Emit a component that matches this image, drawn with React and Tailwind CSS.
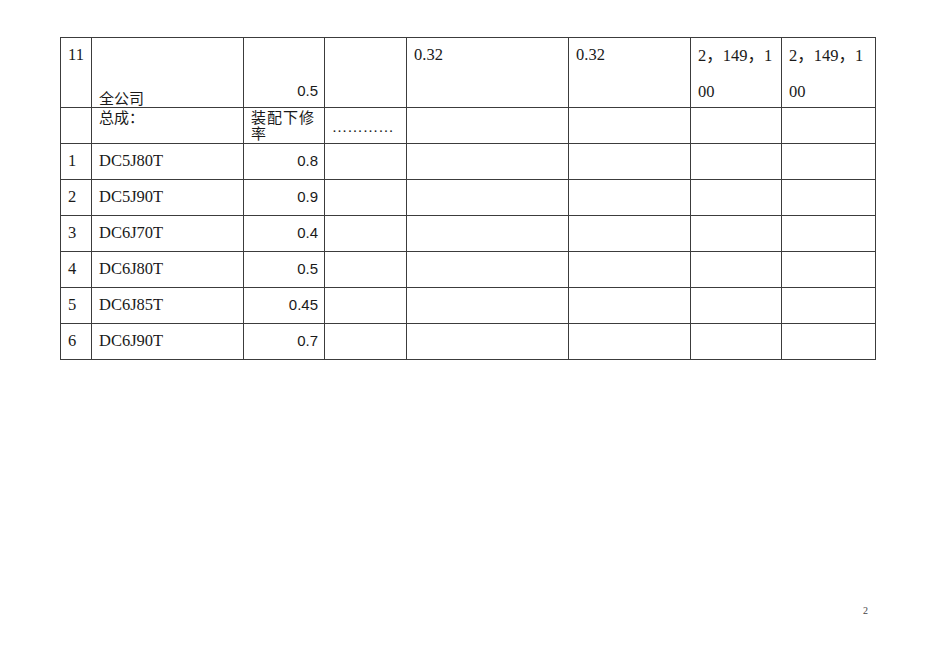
const serif = "font-['Liberation_Serif','Noto_Sans_CJK_SC',serif]"
const cjk = "font-['Noto_Sans_CJK_SC',sans-serif]"
const sans = "font-['Liberation_Sans',Arial,sans-serif]"

const items = [
  ["1", "DC5J80T", "0.8"],
  ["2", "DC5J90T", "0.9"],
  ["3", "DC6J70T", "0.4"],
  ["4", "DC6J80T", "0.5"],
  ["5", "DC6J85T", "0.45"],
  ["6", "DC6J90T", "0.7"],
]

const cell = "border border-[#3c3c3c] px-[7px] p-0"

export default function App() {
  return (
    <div className={`w-[950px] h-[672px] bg-white text-[#1a1a1a] ${serif} text-[16.5px] relative`}>
      <div className="pt-[37px] pl-[60px]">
        <table className="border-collapse table-fixed w-[815px]">
          <colgroup>
            <col className="w-[31px]" />
            <col className="w-[152px]" />
            <col className="w-[81px]" />
            <col className="w-[82px]" />
            <col className="w-[162px]" />
            <col className="w-[122px]" />
            <col className="w-[91px]" />
            <col className="w-[94px]" />
          </colgroup>
          <tbody>
            <tr className="h-[70px]">
              <td className={`${cell} align-top leading-[34px]`}>11</td>
              <td className={`${cell} align-bottom`}>
                <div className={`${cjk} text-[15px] leading-[18px]`}>全公司</div>
              </td>
              <td className={`${cell} align-bottom text-right pb-[3px] pr-[6px]`}>
                <span className={`${sans} text-[15px]`}>0.5</span>
              </td>
              <td className={cell}></td>
              <td className={`${cell} align-top leading-[34px]`}>0.32</td>
              <td className={`${cell} align-top leading-[34px]`}>0.32</td>
              <td className={`${cell} align-top`}>
                <div className="h-[60px] leading-[36px] break-all">2，149，100</div>
              </td>
              <td className={`${cell} align-top`}>
                <div className="h-[60px] leading-[36px] break-all">2，149，100</div>
              </td>
            </tr>
            <tr className="h-[36px]">
              <td className={cell}></td>
              <td className={`${cell} align-top`}>
                <div className={`${cjk} text-[15px] leading-[18px]`}>总成：</div>
              </td>
              <td className={`${cell} align-top pr-[4px]`}>
                <div className={`${cjk} text-[15px] leading-[16px] tracking-[1px] pt-[1px]`}>装配下修率</div>
              </td>
              <td className={`${cell} align-middle`}>
                <div className="pt-[4px] text-[15px] tracking-[0.5px]">…………</div>
              </td>
              <td className={cell}></td>
              <td className={cell}></td>
              <td className={cell}></td>
              <td className={cell}></td>
            </tr>
            {items.map(([n, code, v]) => (
              <tr key={n} className="h-[36px]">
                <td className={`${cell} align-middle`}>{n}</td>
                <td className={`${cell} align-middle`}>{code}</td>
                <td className={`${cell} align-middle text-right pr-[6px]`}>
                  <span className={`${sans} text-[15px]`}>{v}</span>
                </td>
                <td className={cell}></td>
                <td className={cell}></td>
                <td className={cell}></td>
                <td className={cell}></td>
                <td className={cell}></td>
              </tr>
            ))}
          </tbody>
        </table>
      </div>
      <div className="absolute left-[863px] top-[603px] text-[10px] text-[#444]">2</div>
    </div>
  )
}
